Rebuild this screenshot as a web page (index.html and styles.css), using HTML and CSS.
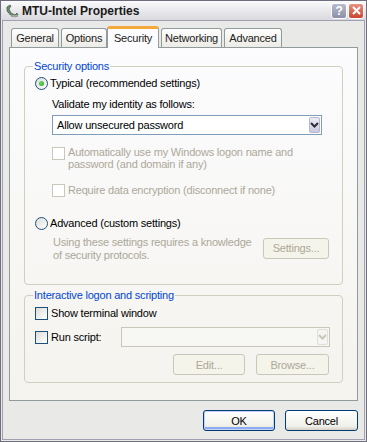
FILE: index.html
```html
<!DOCTYPE html>
<html lang="en">
<head>
    <meta charset="UTF-8">
    <title>MTU-Intel Properties</title>
    <link rel="stylesheet" href="styles.css">
</head>
<body>
    <div class="window">
        <div class="titlebar">
            <svg class="app-icon" width="14" height="14" viewBox="0 0 14 14">
                <path d="M2 3 L5 1 L6 2 L4 5 L6 9 L10 11 L12 9 L13 11 L10 13 Q5 12 2 7 Z" fill="#6f8f6f" stroke="#3c5a3c" stroke-width="0.7"/>
                <rect x="6" y="11" width="7" height="2" fill="#9aa59a"/>
            </svg>
            <span class="title">MTU-Intel Properties</span>
            <span class="cap-btn help">?</span>
            <span class="cap-btn close">
                <svg width="9" height="9" viewBox="0 0 9 9"><path d="M1 1 L8 8 M8 1 L1 8" stroke="#fff" stroke-width="2"/></svg>
            </span>
        </div>

        <div class="client">
            <div class="tabs">
                <span class="tab tab-general">General</span>
                <span class="tab tab-options">Options</span>
                <span class="tab tab-security active">Security</span>
                <span class="tab tab-networking">Networking</span>
                <span class="tab tab-advanced">Advanced</span>
            </div>

            <div class="panel">
                <fieldset class="group group-security">
                    <legend>Security options</legend>
                    <div class="option">
                        <span class="radio checked"></span>
                        <span>Typical (recommended settings)</span>
                    </div>
                    <div class="sub">
                        <div class="label">Validate my identity as follows:</div>
                        <div class="select">
                            <span class="select-text">Allow unsecured password</span>
                            <span class="select-arrow">
                                <svg width="9" height="6" viewBox="0 0 9 6"><path d="M1 1 L4.5 4.5 L8 1" fill="none" stroke="#2c2c3c" stroke-width="2"/></svg>
                            </span>
                        </div>
                        <div class="check-row disabled auto-logon">
                            <span class="checkbox"></span>
                            <span>Automatically use my Windows logon name and<br>password (and domain if any)</span>
                        </div>
                        <div class="check-row disabled encrypt">
                            <span class="checkbox"></span>
                            <span>Require data encryption (disconnect if none)</span>
                        </div>
                    </div>
                    <div class="option advanced">
                        <span class="radio"></span>
                        <span>Advanced (custom settings)</span>
                    </div>
                    <div class="advanced-row">
                        <span class="disabled-text">Using these settings requires a knowledge<br>of security protocols.</span>
                        <span class="btn disabled settings-btn">Settings...</span>
                    </div>
                </fieldset>

                <fieldset class="group group-script">
                    <legend>Interactive logon and scripting</legend>
                    <div class="check-row">
                        <span class="checkbox"></span>
                        <span>Show terminal window</span>
                    </div>
                    <div class="script-row">
                        <div class="check-row">
                            <span class="checkbox"></span>
                            <span>Run script:</span>
                        </div>
                        <div class="select disabled script-select">
                            <span class="select-text"></span>
                            <span class="select-arrow">
                                <svg width="9" height="6" viewBox="0 0 9 6"><path d="M1 1 L4.5 4.5 L8 1" fill="none" stroke="#c9c7ba" stroke-width="2"/></svg>
                            </span>
                        </div>
                    </div>
                    <div class="script-buttons">
                        <span class="btn disabled edit-btn">Edit...</span>
                        <span class="btn disabled browse-btn">Browse...</span>
                    </div>
                </fieldset>
            </div>

            <div class="dialog-buttons">
                <span class="btn default ok-btn">OK</span>
                <span class="btn cancel-btn">Cancel</span>
            </div>
        </div>
    </div>
</body>
</html>
```

FILE: styles.css
```css
body {
    margin: 0;
    font-family: "Liberation Sans", Arial, sans-serif;
    font-size: 11px;
    letter-spacing: -0.2px;
    color: #000;
    background: #fff;
}
.window {
    width: 367px;
    height: 442px;
    box-sizing: border-box;
    border: 1px solid #6e6e7e;
    background: #e9e9e7;
    display: flex;
    flex-direction: column;
}
.titlebar {
    height: 19px;
    display: flex;
    align-items: center;
    padding: 0 2px 0 4px;
    background: linear-gradient(#fbfbfc, #e6e6ea 60%, #d8d8de);
}
.app-icon {
    margin-right: 3px;
}
.title {
    font-weight: bold;
    font-size: 12px;
    letter-spacing: 0;
    color: #1a1a1a;
    flex: 1;
}
.cap-btn {
    width: 14px;
    height: 14px;
    border: 1px solid #fff;
    border-radius: 3px;
    display: flex;
    align-items: center;
    justify-content: center;
    margin-left: 1px;
}
.help {
    background: linear-gradient(#b8bccc, #8c90a8);
    color: #fff;
    font-weight: bold;
    font-size: 12px;
}
.close {
    background: linear-gradient(#e99080, #c8452f);
}
.client {
    flex: 1;
    margin: 0 1px 1px;
    border: 1px solid #a0a0b0;
    padding: 5px 6px 0;
}
.tabs {
    display: flex;
    align-items: flex-end;
    height: 21px;
    padding-left: 2px;
}
.tab {
    height: 19px;
    box-sizing: border-box;
    line-height: 18px;
    text-align: center;
    margin-right: 2px;
    border: 1px solid #919b9c;
    border-bottom: none;
    border-radius: 3px 3px 0 0;
    background: linear-gradient(#fefefe, #ecebe6);
    color: #222;
}
.tab-general { width: 48px; }
.tab-options { width: 46px; }
.tab-security { width: 52px; }
.tab-networking { width: 61px; }
.tab-advanced { width: 58px; }
.tab.active {
    height: 22px;
    line-height: 18px;
    margin: 0 2px -1px -2px;
    border-top: 3px solid #f5a83a;
    background: #fcfcfe;
    position: relative;
    z-index: 1;
}
.panel {
    height: 354px;
    box-sizing: border-box;
    border: 1px solid #919b9c;
    background: linear-gradient(#fcfcfe, #f4f3ee);
    padding: 12px 14px 0;
}
.group {
    margin: 0;
    padding: 4px 10px 22px;
    border: 1px solid #d0d0bf;
    border-radius: 4px;
    min-width: 0;
}
.group legend {
    color: #0046d5;
    padding: 0 1px;
    line-height: 13px;
    margin-left: -2px;
}
.group-script {
    margin-top: 4px;
    padding: 5px 10px 7px;
}
.option {
    display: flex;
    align-items: center;
    gap: 2px;
    line-height: 13px;
}
.radio {
    width: 13px;
    height: 13px;
    box-sizing: border-box;
    border: 1px solid #1c5180;
    border-radius: 50%;
    background: linear-gradient(135deg, #dcdcd7, #fff);
    display: flex;
    align-items: center;
    justify-content: center;
}
.radio.checked::after {
    content: "";
    width: 5px;
    height: 5px;
    border-radius: 50%;
    background: radial-gradient(circle at 40% 40%, #6fdc6a, #21a121);
}
.sub {
    padding-left: 17px;
}
.label {
    margin-top: 8px;
    line-height: 13px;
}
.select {
    margin-top: 4px;
    width: 270px;
    height: 20px;
    box-sizing: border-box;
    border: 1px solid #7f9db9;
    background: #fff;
    display: flex;
    align-items: center;
    padding: 1px;
}
.select-text {
    flex: 1;
    padding-left: 3px;
}
.select-arrow {
    width: 11px;
    height: 16px;
    box-sizing: border-box;
    border: 1px solid #b7b7cf;
    border-radius: 2px;
    background: linear-gradient(#ececf6, #c9c9dd);
    display: flex;
    align-items: center;
    justify-content: center;
}
.select.disabled {
    border-color: #c9c7ba;
    background: #f7f7f4;
}
.select.disabled .select-arrow {
    border-color: #e0dfd8;
    background: #f5f5f2;
}
.check-row {
    display: flex;
    align-items: flex-start;
    gap: 3px;
    line-height: 13px;
}
.checkbox {
    width: 13px;
    height: 13px;
    box-sizing: border-box;
    border: 1px solid #1c5180;
    background: linear-gradient(135deg, #dcdcd7, #fff);
    flex-shrink: 0;
}
.check-row.disabled {
    color: #aca899;
}
.check-row.disabled .checkbox {
    border-color: #c9c7ba;
    background: #fff;
}
.auto-logon {
    margin-top: 11px;
    line-height: 12px;
}
.auto-logon .checkbox {
    margin-top: 1px;
}
.encrypt {
    margin-top: 14px;
}
.advanced {
    margin-top: 20px;
}
.advanced-row {
    margin-top: 6px;
    padding-left: 18px;
    display: flex;
    align-items: flex-start;
    line-height: 13px;
}
.disabled-text {
    color: #aca899;
    flex: 1;
}
.btn {
    height: 21px;
    box-sizing: border-box;
    border: 1px solid #003c74;
    border-radius: 3px;
    background: linear-gradient(#fff, #f0f0ea 80%, #d6d0c5);
    display: flex;
    align-items: center;
    justify-content: center;
}
.btn.disabled {
    border-color: #c9c7ba;
    background: #f5f4ea;
    color: #aca899;
}
.settings-btn {
    width: 66px;
    margin: 2px 3px 0 0;
}
.script-row {
    margin-top: 7px;
    display: flex;
    align-items: center;
    justify-content: space-between;
}
.script-select {
    margin-top: 0;
    width: 209px;
    margin-right: 2px;
}
.script-buttons {
    margin-top: 7px;
    display: flex;
    justify-content: flex-end;
    gap: 11px;
    padding-right: 3px;
}
.edit-btn {
    width: 72px;
}
.browse-btn {
    width: 73px;
}
.dialog-buttons {
    display: flex;
    justify-content: flex-end;
    gap: 10px;
    margin-top: 9px;
}
.ok-btn {
    width: 72px;
    box-shadow: inset 0 0 0 1px #c3d4f7, inset 0 -2px 0 1px #8eaaf0;
}
.cancel-btn {
    width: 73px;
}
```
